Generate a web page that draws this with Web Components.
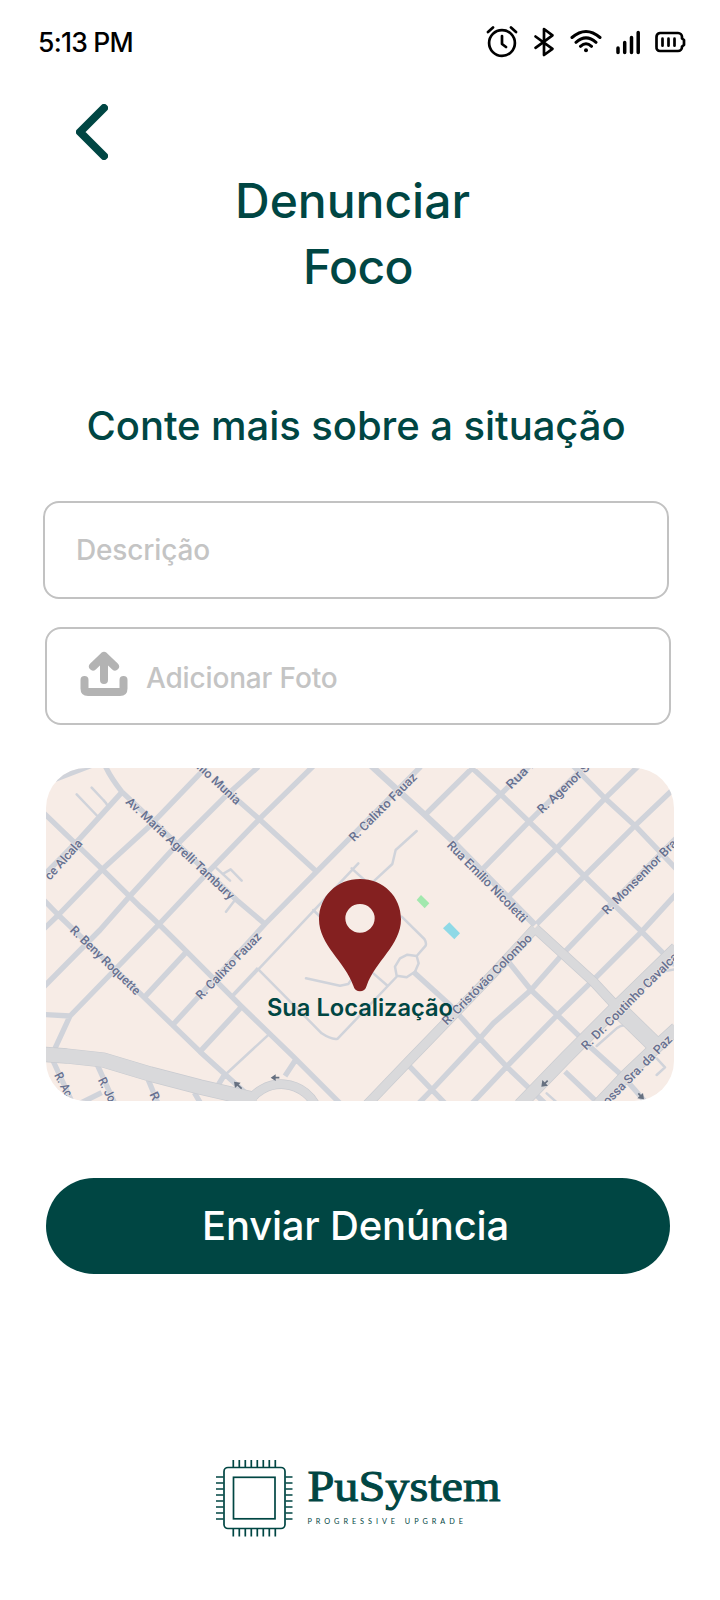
<!DOCTYPE html>
<html lang="pt-BR">
<head>
<meta charset="utf-8">
<title>Denunciar Foco</title>
<style>
html,body{margin:0;background:#fff}
body{width:720px;height:1600px;overflow:hidden;font-family:Inter,"Open Sans",sans-serif;font-weight:500;color:#004643}
</style>
</head>
<body>
<report-screen></report-screen>
<script>
function define(name, html, setup) {
  const t = document.createElement('template');
  t.innerHTML = html;
  customElements.define(name, class extends HTMLElement {
    constructor() {
      super();
      this.attachShadow({mode: 'open'}).append(t.content.cloneNode(true));
    }
    connectedCallback() { if (setup) setup(this, this.shadowRoot); }
  });
}

/* One line of text whose tracking is adjusted to a given advance width. */
define('fit-line', `<style>:host{display:block;white-space:nowrap}span{display:inline-block}</style><span><slot></slot></span>`, (el, root) => {
  const span = root.querySelector('span');
  const target = +el.getAttribute('width');
  const n = el.textContent.length;
  span.style.letterSpacing = (target - span.getBoundingClientRect().width) / n + 'px';
});

define('status-bar', `<style>
:host{display:flex;height:84px;box-sizing:border-box;padding:0 34px 0 38px;align-items:center;justify-content:space-between;color:#000}
fit-line{font-size:26.5px;line-height:40px}
svg{display:block;fill:none;stroke:#000;stroke-width:2.7;stroke-linecap:round;stroke-linejoin:round}
</style>
<fit-line width="95">5:13 PM</fit-line>
<svg width="200" height="34" viewBox="486 25 200 34">
<circle cx="502" cy="43" r="12.9"/><path d="M502 36v8l4 3M488 32l5-4.500M516 32l-5-4.500"/>
<path d="M535.500 36.500l17 12.300-8.500 6.200V29l8.500 6.300-17 12.500" stroke-width="2.700"/>
<path d="M572 37.500Q586 25.500 600 37.500M576 42.300Q586 33.500 596 42.300M580.500 46.300Q586 41.300 591.500 46.300" stroke-width="3"/><circle cx="586" cy="50.300" r="2" fill="#000" stroke="none"/>
<path d="M618 48v4.500M624.700 42.500v10M631.500 37.500v15M638.200 32.500v20" stroke-width="3.500"/>
<path d="M660 33h18a4 4 0 0 1 4 4v1.500l2 1.500v5l-2 1.500V47a4 4 0 0 1-4 4h-18a3.500 3.500 0 0 1-3.500-4V37a4 4 0 0 1 3.500-4zM662.500 38.700v7M668.500 38.700v7M674.500 38.700v7"/>
</svg>`);

define('back-button', `<style>:host{display:block;height:56px;padding:20px 0 0 76px}svg{display:block;fill:none;stroke:#004643;stroke-width:8;stroke-linecap:round;stroke-linejoin:round}</style>
<svg width="32" height="56" viewBox="0 0 32 56"><path d="M28 4L4 28l24 24"/></svg>`);

define('screen-title', `<style>:host{display:block;font-size:48px;line-height:66px}
.a{padding-left:235px}.b{padding-left:303px}</style>
<fit-line class="a" width="235">Denunciar</fit-line><fit-line class="b" width="110">Foco</fit-line>`);

define('form-field', `<style>:host{display:flex;box-sizing:border-box;width:626px;height:98px;border:2px solid #c2c2c2;border-radius:16px;align-items:center;color:#c4c4c4;font-size:28px;line-height:34px}</style><slot></slot>`);

define('upload-icon', `<style>:host{display:block}svg{display:block;fill:none;stroke:#b3b3b3;stroke-width:8;stroke-linecap:round;stroke-linejoin:round}</style>
<svg width="48" height="46" viewBox="80 651 48 46"><path d="M104 680v-24M93 666.500l11-10.500 11 10.500"/><path d="M84.500 680v8.500q0 3.500 3.500 3.500h32q3.500 0 3.500-3.500v-8.500"/></svg>`);

define('street-map', `<style>:host{display:block;width:628px;height:333px;border-radius:40px;overflow:hidden;background:#f7ece6}
svg{display:block}
.r{fill:none;stroke:#d0d3da;stroke-width:16;stroke-linejoin:round}
.p{fill:none;stroke:#d0d3da;stroke-width:7.500;stroke-linejoin:round;stroke-linecap:round}
.e,.w{fill:none;stroke-linejoin:round}.e{stroke:#c9cbd0}.w{stroke:#d9d9db}
.l text{font:500 37px Roboto,sans-serif;fill:#667090;stroke:#f3ebe8;stroke-width:5px;stroke-opacity:.6;paint-order:stroke;stroke-linejoin:round}
.a{fill:none;stroke:#667080;stroke-width:5}
.here{font:600 71px Inter,sans-serif;fill:#004643}
</style>
<svg width="628" height="333" viewBox="18 24 1884 999">
<path class="r" d="M18 68L165 12M195 16Q210 50 245 95L590 420L675 492M1142 20L830 335L675 492L398 795M530 65L655 175L830 335M250 92L120 235L0 358M500 20L330 197L187 328L55 465L0 518M655 20L550 115L410 255L268 410L180 510L0 692M820 18L660 175L515 325L355 495L90 768L45 865M0 763L90 768M0 148L187 328L300 440Q330 465 440 575L605 740L760 890L900 1030M0 408L55 465L310 710L480 875L640 1020M440 575L310 715M605 740L480 875M555 942L530 982M770 895L735 948M38 900L98 1030M170 910L224 1030M185 998L110 1035M325 960L354 1030M463 998L482 1030"/>
<path class="r" d="M655 625L580 705" style="stroke-width:12"/>
<path class="r" style="stroke-width:19" d="M992 16L1155 165L1240 245L1485 495"/>
<path class="r" d="M1155 165L1305 16M1290 18L1382 103L1467 185L1550 265L1633 348L1805 515L1905 615M1240 245L1382 103L1470 16M1330 325L1467 185L1635 18M1405 410L1550 265L1695 115L1795 18M1490 492L1633 348L1785 197L1910 78M1915 228L1690 455L1570 580L1473 690L1360 790L1320 835L1175 990L1136 1030M1910 400L1805 515L1655 665L1552 765L1400 920L1296 1030M1600 18L1695 115L1785 197L1910 328M1405 605L1473 690L1552 765L1650 860L1750 950L1820 1030M1120 635L1230 735L1320 835L1400 920L1515 1030M1100 910L1215 1030M1575 935L1675 1030"/>
<path class="p" d="M110 103L172 168M155 83L190 120Q200 130 203 138M530 325L570 362M548 342L572 328L605 362M585 420L558 455M955 310L655 628L845 820Q875 840 893 836L1072 648M690 820L555 945M1130 213L1067 270L1057 312L1000 365M935 325L1040 420M820 450L850 480M1085 470L1153 537Q1160 548 1157 557L1130 588M1065 620L1080 595L1102 584L1130 588L1136 610L1125 635L1100 652L1070 647ZM1000 640L1040 675M798 655L900 677L925 672L940 650M1670 858L1730 805Q1740 797 1755 795L1820 855M1850 895L1875 922L1850 945M1905 628L1872 634M1520 1000L1550 1027"/>
<g class="e"><path stroke-width="46" d="M0 882L80 888L190 900L330 942L480 981L650 1020"/><path stroke-width="29" d="M620 1038A115 115 0 0 1 834 1055"/><path stroke-width="30" d="M1485 505L1360 640L1240 765L1100 910L980 1035M1485 505L1660 665L1725 735"/><path stroke-width="40" d="M1910 565L1725 745L1580 890L1440 1035M1910 805L1850 860L1760 945L1675 1035"/><path stroke-width="52" d="M1722 735L1845 855"/></g>
<g class="w"><path stroke-width="42" d="M0 882L80 888L190 900L330 942L480 981L650 1020"/><path stroke-width="25" d="M620 1038A115 115 0 0 1 834 1055"/><path stroke-width="26" d="M1485 505L1360 640L1240 765L1100 910L980 1035M1485 505L1660 665L1725 735"/><path stroke-width="36" d="M1910 565L1725 745L1580 890L1440 1035M1910 805L1850 860L1760 945L1675 1035"/><path stroke-width="48" d="M1722 735L1845 855"/></g>
<path d="M1143 405l25 25-14 15-24-25z" fill="#a2e8ae"/><path d="M1228 487l32 33-17 18-34-33z" fill="#8fd9e6"/>
<g class="a"><path d="M605 986L592 974M718 953H700M1523 962L1513 972M1795 1000L1804 1010"/><path fill="#667080" stroke="none" d="M582 965l20 3-17 16zM692 953l15-10v20zM1504 980l3-20 17 17zM1812 1018l-20-3 17-16z"/></g>
<g class="l"></g>
<path fill="#842020" fill-rule="evenodd" d="M960 357C1030 357 1083 410 1083 478C1083 555 1005 605 980 677C975 699 945 699 940 677C915 605 837 555 837 478C837 410 890 357 960 357ZM960 432A44 43 0 1 0 960 518A44 43 0 1 0 960 432Z"/>
<text class="here" x="681" y="767" textLength="558">Sua Localização</text>
</svg>`, (el, root) => {
  const streets = [
    ['Av. Maria Agrelli Tambury', 255, 128, 569, 421],
    ['ilio Munia', 468, 24, 589, 136],
    ['ce Alcala', 30, 362, 129, 252],
    ['R. Beny Roquette', 88, 513, 287, 707],
    ['R. Calixto Fauaz', 483, 721, 666, 532],
    ['R. Calixto Fauaz', 942, 247, 1133, 54],
    ['Rua Emilio Nicoletti', 1219, 258, 1447, 490],
    ['Rua I', 1413, 89, 1483, 19],
    ['R. Agenor S', 1506, 163, 1651, 25],
    ['R. Monsenhor Bra', 1701, 466, 1913, 253],
    ['R. Cristóvão Colombo', 1221, 797, 1478, 537],
    ['R. Dr. Coutinho Cavalca', 1639, 872, 1917, 593],
    ['ossa Sra. da Paz', 1703, 1037, 1899, 841],
    ['R. Ac', 42, 945, 77, 1013],
    ['R. Jo', 173, 960, 207, 1029],
    ['R.', 328, 1003, 343, 1034]
  ];
  const g = root.querySelector('.l');
  for (const [name, x1, y1, x2, y2] of streets) {
    const t = document.createElementNS('http://www.w3.org/2000/svg', 'text');
    t.textContent = name;
    t.setAttribute('textLength', Math.hypot(x2 - x1, y2 - y1).toFixed(1));
    t.setAttribute('lengthAdjust', 'spacingAndGlyphs');
    t.setAttribute('transform', `translate(${x1} ${y1}) rotate(${(Math.atan2(y2 - y1, x2 - x1) * 180 / Math.PI).toFixed(2)})`);
    g.append(t);
  }
});

define('submit-button', `<style>:host{display:block;width:624px;height:96px;border-radius:48px;background:#004643;color:#fff;font-size:40px;line-height:96px;box-sizing:border-box;padding-left:156px}</style><fit-line width="307">Enviar Denúncia</fit-line>`);

define('brand-logo', `<style>:host{display:block}svg{display:block}.c{fill:none;stroke:#004643;stroke-width:1.700}
.n{font:43.500px "Liberation Serif",serif;fill:#004643;stroke:#004643;stroke-width:1px}.t{font:7.300px Lato,sans-serif;fill:#004643}</style>
<svg width="290" height="80" viewBox="214 1458 290 80">
<g class="c"><rect x="224" y="1467.500" width="61" height="61" rx="4"/><rect x="233.500" y="1477.300" width="41.500" height="41.500"/>
<path d="M233.300 1460v7M239.300 1460v7M245.300 1460v7M251.300 1460v7M257.300 1460v7M263.300 1460v7M269.300 1460v7M275.300 1460v7M233.300 1529v7.500M239.300 1529v7.500M245.300 1529v7.500M251.300 1529v7.500M257.300 1529v7.500M263.300 1529v7.500M269.300 1529v7.500M275.300 1529v7.500M216 1477h7.500M216 1483h7.500M216 1489h7.500M216 1495h7.500M216 1501h7.500M216 1507h7.500M216 1513h7.500M216 1519h7.500M285.500 1477h7M285.500 1483h7M285.500 1489h7M285.500 1495h7M285.500 1501h7M285.500 1507h7M285.500 1513h7M285.500 1519h7"/></g>
<text class="n" x="307.500" y="1501" textLength="193" lengthAdjust="spacingAndGlyphs">PuSystem</text>
<text class="t" x="307.500" y="1524" textLength="155.500">PROGRESSIVE UPGRADE</text>
</svg>`);

define('report-screen', `<style>
:host{display:flex;flex-direction:column;align-items:flex-start;width:720px;height:1600px;background:#fff}
status-bar{width:100%;box-sizing:border-box}
screen-title{margin-top:7.500px}
.q{font-size:40px;line-height:50px;margin:101.500px 0 0 86.500px}
.d{margin:50px 0 0 43px}.d fit-line{margin-left:31px}
.f{margin:28px 0 0 45px}.f upload-icon{margin:-4px 0 0 33px}.f fit-line{margin:4px 0 0 18px}
street-map{margin:43px 0 0 46px}
submit-button{margin:77px 0 0 46px}
brand-logo{margin:184px 0 0 214px}
</style>
<status-bar></status-bar>
<back-button></back-button>
<screen-title></screen-title>
<fit-line class="q" width="539">Conte mais sobre a situação</fit-line>
<form-field class="d"><fit-line width="134">Descrição</fit-line></form-field>
<form-field class="f"><upload-icon></upload-icon><fit-line width="191.500">Adicionar Foto</fit-line></form-field>
<street-map></street-map>
<submit-button></submit-button>
<brand-logo></brand-logo>`);
</script>
</body>
</html>
